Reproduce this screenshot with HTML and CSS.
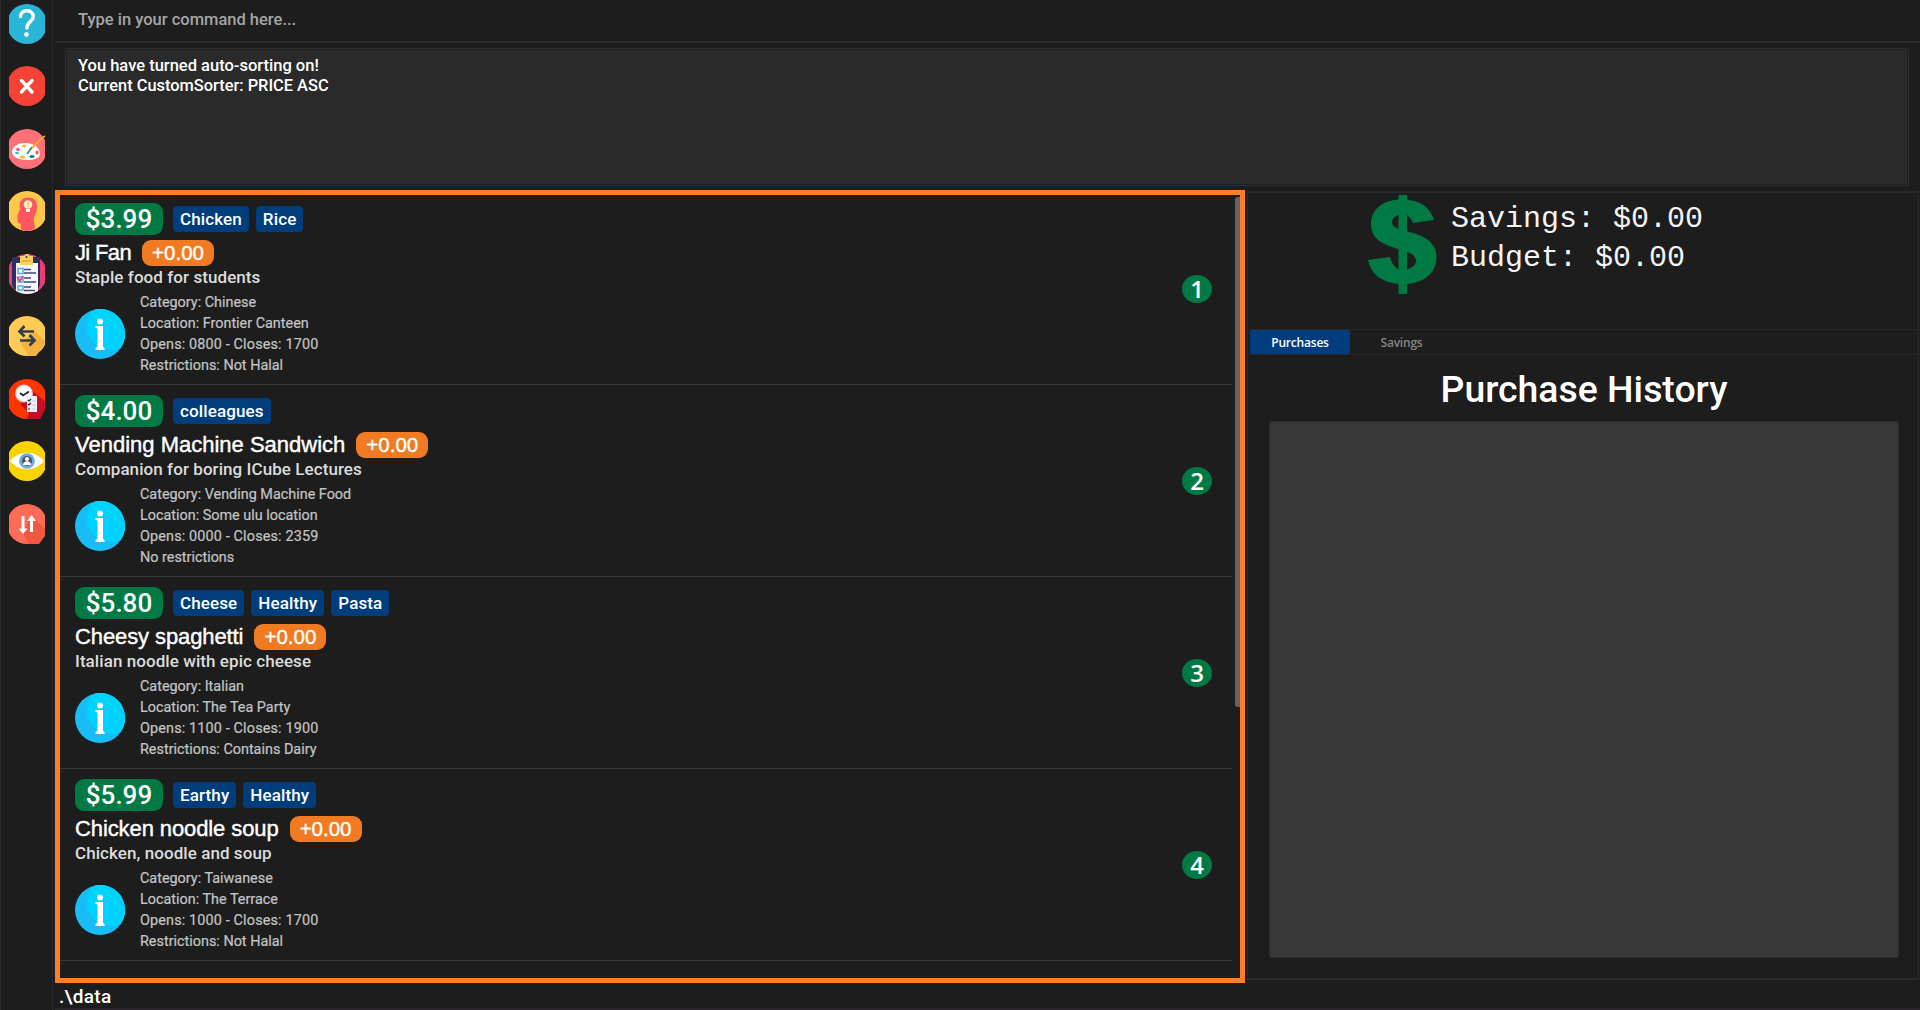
FILE: index.html
```html
<!DOCTYPE html>
<html lang="en">
<head>
<meta charset="utf-8">
<title>Food catalogue</title>
<link rel="stylesheet" href="styles.css">
</head>
<body>
<div class="app">
  <nav class="sidebar">
    <svg class="icon" viewBox="0 0 36 40"><circle cx="18" cy="20" r="20" fill="#29b6d6"/><path d="M11.500 12.500C11.500 4.500 25 5 24.300 13c-.4 4.500-6.300 4.500-6.300 11" fill="none" stroke="#fff" stroke-width="3.400" stroke-linecap="round"/><circle cx="17.500" cy="30.500" r="2.300" fill="#fff"/></svg>
    <svg class="icon" viewBox="0 0 36 40"><circle cx="18" cy="20" r="20" fill="#f44336"/><path d="M12.500 14.500l10.500 11.500M23 14.500l-10.500 11.500" stroke="#fff" stroke-width="3.400" stroke-linecap="round"/></svg>
    <svg class="icon" viewBox="0 0 36 40"><circle cx="18" cy="20" r="20" fill="#ff7079"/><path d="M3 23C3 17 10 13.500 17 14c8 .3 14 5 14 11 0 4-6 6-13 6-8 0-15-3-15-8z" fill="#fff"/><circle cx="9" cy="20.500" r="1.800" fill="#f4515f"/><ellipse cx="8" cy="24" rx="2" ry="1.300" fill="#28cdbb"/><ellipse cx="15" cy="17" rx="2.200" ry="1.500" fill="#ffb82b"/><ellipse cx="13.500" cy="28" rx="2.500" ry="1.500" fill="#ffb21f"/><ellipse cx="23" cy="27.500" rx="2.600" ry="1.500" fill="#167b88"/><ellipse cx="28" cy="23.500" rx="1.500" ry="2" fill="#f4515f"/><path d="M18 25l5-7" stroke="#348b91" stroke-width="1.800"/><path d="M23 19c5-4 6-8 13-12" fill="none" stroke="#f7a928" stroke-width="1.800"/></svg>
    <svg class="icon" viewBox="0 0 36 40"><circle cx="18" cy="20" r="20" fill="#ffc84a"/><path d="M8.500 24l2.500-6C9 10 14 6.500 19.500 6.500c6 0 8.500 4 8.500 9.500 0 7-4 9-3 15l1 6.500c-5 3-10 3-14 1l-.5-6c-3 .5-3-2-3-7z" fill="#ff5660"/><circle cx="19" cy="13.500" r="4.300" fill="#fff0bd"/><path d="M17 18h4v3h-4z" fill="#fff"/><path d="M19 12v4" stroke="#ffc84a" stroke-width="1.500"/></svg>
    <svg class="icon" viewBox="0 0 36 40"><circle cx="18" cy="20" r="20" fill="#e83e75"/><path d="M3 3h28v28l-2 4H5l-2-4z" fill="#2d2e63"/><path d="M7 9h22v28c-7 4-15 4-22 0z" fill="#f7f8fb"/><path d="M11 2h4c2-3 4-3 6 0h3v9H11z" fill="#ffd05a"/><path d="M13 7h9" stroke="#e8a93e" stroke-width="1.500"/><circle cx="17.500" cy="3" r="1" fill="#2d2e63"/><g fill="#fff" stroke="#5ba8dd" stroke-width="1.500"><path d="M9 14.500h5v5H9zM9 23h5v5H9zM9 32h5v4H9z"/></g><path d="M15 15.500h7M15 19h12M15 24h7M15 28h12M15 33h7M15 36.500h11" stroke="#41437b" stroke-width="1.700"/><path d="M8 23l3 4 3-5" fill="none" stroke="#e83e75" stroke-width="1.700"/></svg>
    <svg class="icon" viewBox="0 0 36 40"><circle cx="18" cy="20" r="20" fill="#fecb57"/><path d="M25 15l12 11-10 14H20L12 28z" fill="#f4b13d"/><path d="M25 15.500H11M15.500 10l-5 5.500 5 5M11 24.500h14M20.500 19l5 5.500-5 5" fill="none" stroke="#303f50" stroke-width="2.700"/></svg>
    <svg class="icon" viewBox="0 0 36 40"><circle cx="18" cy="20" r="20" fill="#ff3500"/><path d="M20 9l19 16-8 15H18l2-6-8-8z" fill="#c90c27"/><circle cx="15" cy="14.500" r="8.200" fill="#fff" stroke="#d8dcde" stroke-width="1.500"/><path d="M11 14l3 2.500 6-4" fill="none" stroke="#20282c" stroke-width="1.800"/><path d="M18 17h10v16H18z" fill="#f1f1f8"/><path d="M19 21l1 1 2-2M19 25l1 1 2-2M19 30h2" fill="none" stroke="#23252c" stroke-width="1.200"/><path d="M23 22h4M23 26h4M23 30h4" stroke="#c8cbdc"/></svg>
    <svg class="icon" viewBox="0 0 36 40"><circle cx="18" cy="20" r="20" fill="#fad400"/><path d="M1 20C10 9 26 9 35 20c-9 11-25 11-34 0z" fill="#fff"/><circle cx="18" cy="20" r="7.800" fill="#66afe0"/><circle cx="18" cy="20" r="5" fill="#4b5664"/><circle cx="18" cy="18" r="2.100" fill="#fff"/><path d="M14 24c0-5 8-5 8 0z" fill="#fff"/></svg>
    <svg class="icon" viewBox="0 0 36 40"><circle cx="18" cy="20" r="20" fill="#ff6b57"/><path d="M22 11l17 17-9 12H20l-6-11z" fill="#f0583f"/><path d="M14 12v15M22.500 28V14" stroke="#fff" stroke-width="3"/><path d="M9.500 24.500h9L14 30zM18 17h9l-4.500-6z" fill="#fff"/></svg>
  </nav>
  <main class="main">
    <header class="command">Type in your command here...</header>
    <section class="result"><div class="result-box"><div class="r1">You have turned auto-sorting on!</div><div class="r2">Current CustomSorter: PRICE ASC</div></div></section>
    <div class="content">
      <section class="foods">
        <article class="food">
          <div class="info">
            <div class="tags"><span class="price">$3.99</span><span class="tag">Chicken</span><span class="tag">Rice</span></div>
            <div class="title"><span class="name tighter">Ji Fan</span><span class="delta">+0.00</span></div>
            <div class="desc">Staple food for students</div>
            <div class="details"><svg class="i" viewBox="0 0 50 50"><use href="#info"/></svg><div><p>Category: Chinese</p><p>Location: Frontier Canteen</p><p class="hours">Opens: 0800 - Closes: 1700</p><p>Restrictions: Not Halal</p></div></div>
          </div><span class="num">1</span>
        </article>
        <article class="food">
          <div class="info">
            <div class="tags"><span class="price">$4.00</span><span class="tag">colleagues</span></div>
            <div class="title"><span class="name">Vending Machine Sandwich</span><span class="delta">+0.00</span></div>
            <div class="desc">Companion for boring ICube Lectures</div>
            <div class="details"><svg class="i" viewBox="0 0 50 50"><use href="#info"/></svg><div><p>Category: Vending Machine Food</p><p>Location: Some ulu location</p><p class="hours">Opens: 0000 - Closes: 2359</p><p>No restrictions</p></div></div>
          </div><span class="num">2</span>
        </article>
        <article class="food">
          <div class="info">
            <div class="tags"><span class="price">$5.80</span><span class="tag">Cheese</span><span class="tag">Healthy</span><span class="tag">Pasta</span></div>
            <div class="title"><span class="name tight">Cheesy spaghetti</span><span class="delta">+0.00</span></div>
            <div class="desc">Italian noodle with epic cheese</div>
            <div class="details"><svg class="i" viewBox="0 0 50 50"><use href="#info"/></svg><div><p>Category: Italian</p><p>Location: The Tea Party</p><p class="hours">Opens: 1100 - Closes: 1900</p><p>Restrictions: Contains Dairy</p></div></div>
          </div><span class="num">3</span>
        </article>
        <article class="food">
          <div class="info">
            <div class="tags"><span class="price">$5.99</span><span class="tag">Earthy</span><span class="tag">Healthy</span></div>
            <div class="title"><span class="name tight">Chicken noodle soup</span><span class="delta">+0.00</span></div>
            <div class="desc">Chicken, noodle and soup</div>
            <div class="details"><svg class="i" viewBox="0 0 50 50"><use href="#info"/></svg><div><p>Category: Taiwanese</p><p>Location: The Terrace</p><p class="hours">Opens: 1000 - Closes: 1700</p><p>Restrictions: Not Halal</p></div></div>
          </div><span class="num">4</span>
        </article>
        <div class="scroll"></div>
      </section>
      <aside class="side">
        <div class="wallet">
          <svg class="dollar" viewBox="0 0 70 100"><path d="M66 25C62 11 50 4.500 34 4.500 14 4.500 3 15 3 29 3 42 12 48 24 52l14 4.500c7 2.500 10 5.500 10 9.500s-4 7-9 8.500h-8C26 72 23 67 22 62L0 65c3 15 16 24 34 24 22 0 34.500-11 34.500-27C68.500 48 58 42 45 38l-14-4c-5-2-7-4-7-7s3-6 7-7.500l8 .5c3 2 5 5 6 8z"/><path d="M30.500 0h8.500v99h-8.500z"/></svg>
          <div class="money"><div>Savings: $0.00</div><div>Budget: $0.00</div></div>
        </div>
        <div class="tabs"><span class="tab active">Purchases</span><span class="tab">Savings</span></div>
        <h1>Purchase History</h1>
        <div class="panel"></div>
      </aside>
    </div>
    <footer class="footer">.\data</footer>
  </main>
</div>
<svg class="defs"><defs><g id="info"><circle cx="25" cy="25" r="25" fill="#19bdf6"/><path d="M20 .5A25 25 0 0 1 45.500 39.500C33 45 10 34 11.500 15c.5-8 4-12 8.500-14.500z" fill="#00d2ff"/><circle cx="25" cy="12.500" r="3" fill="#fff"/><path d="M20.500 17h7.500v21l1.500 1v2h-9v-2l2-1V19.500l-2-.5z" fill="#fff"/></g></defs></svg>
</body>
</html>
```
FILE: styles.css
```css
* { box-sizing: border-box; }
body { margin: 0; background: #1d1d1d; color: #fff; font: 500 16px Roboto, "Liberation Sans", sans-serif; }
p { margin: 0; }
.defs { position: absolute; width: 0; height: 0; }
.app { display: flex; width: 1920px; height: 1010px; overflow: hidden; border-left: 1px solid #292929; }
.sidebar { display: flex; flex-direction: column; gap: 22.5px; width: 52px; flex: none; padding: 3.5px 0 0 8px; border-right: 1px solid #292929; margin-right: 2px; }
.icon { display: block; width: 36px; height: 40px; overflow: hidden; flex: none; }
.main { flex: 1; min-width: 0; display: flex; flex-direction: column; border-bottom: 2px solid #292629; }
.command { height: 43px; flex: none; border-bottom: 2px solid #2a2a2a; padding: 0 23px; line-height: 39px; font-size: 16.5px; color: #a5a5a5; }
.result { height: 147px; flex: none; padding: 5px 11px 4px 10px; }
.result-box { height: 138px; background: #2a2a2a; border: 1px solid #2d2d2d; box-shadow: inset 0 0 0 1px #202020; padding: 7px 12px; line-height: 20px; }
.r1 { font-size: 16.5px; }
.r2 { font-size: 16.4px; }
.content { display: flex; height: 793px; flex: none; }
.foods { position: relative; width: 1190px; flex: none; border: 5px solid #ff7f27; overflow: hidden; }
.food { display: flex; width: 1172px; height: 192px; padding: 10px 20px 0 15px; border-bottom: 1px solid #383838; }
.food:first-child { height: 190px; padding-top: 8px; }
.info { flex: 1; }
.tags { display: flex; align-items: center; height: 32px; }
.price { width: 88px; height: 32px; margin-right: 10px; border-radius: 9px; background: #007a45; font-size: 26px; line-height: 33px; text-align: center; }
.tag { height: 26px; line-height: 27px; padding: 0 7px; margin-right: 7px; border-radius: 4px; background: #003d7c; font-size: 17px; letter-spacing: .12px; }
.title { display: flex; align-items: center; height: 26px; margin-top: 5px; gap: 11px; }
.name { font: 22px/26px "Liberation Sans", sans-serif; -webkit-text-stroke: .4px #fff; }
.tight { letter-spacing: -.1px; }
.tighter { letter-spacing: -.65px; }
.delta { width: 72px; height: 26px; border-radius: 9px; background: #f07b22; font: 20.5px/26px "Liberation Sans", sans-serif; -webkit-text-stroke: .4px #fff; text-align: center; }
.desc { height: 24px; line-height: 22px; color: #dcdcdc; font-size: 17px; letter-spacing: .07px; }
.details { display: flex; gap: 15px; padding-top: 2px; font-size: 14.4px; font-weight: 400; line-height: 21px; color: #c4c4c4; -webkit-text-stroke: .2px #c4c4c4; }
.i { width: 50px; height: 50px; margin-top: 17px; }
.hours { letter-spacing: .15px; }
.num { width: 30px; height: 28px; margin-top: 72px; border-radius: 15px / 14px; background: #007a45; font: 600 24px/28px "Open Sans", sans-serif; text-align: center; }
.scroll { position: absolute; right: 0; top: 2px; width: 5px; height: 510px; background: #626262; border-radius: 3px 0 0 3px; }
.side { flex: 1; height: 789px; margin: 1px 1px 0 2px; border: 1px solid #292929; border-width: 2px 1px; }
.wallet { display: flex; height: 136px; padding: 2px 0 0 120px; gap: 13px; }
.dollar { width: 70px; height: 100px; fill: #007a45; }
.money { padding-top: 5px; font: 30px/39px "Liberation Mono", monospace; color: #f4f4f4; }
.tabs { display: flex; height: 26px; padding-left: 2px; border: 1px solid #292929; border-width: 1px 0; font: 600 12px/25px "Open Sans", sans-serif; color: #858585; }
.tab { width: 103px; text-align: center; letter-spacing: -.2px; }
.active { width: 100px; background: #003d7c; color: #fff; border-radius: 3px 3px 0 0; }
h1 { margin: 0; padding-left: 2px; height: 66px; font-weight: 500; font-size: 37.4px; line-height: 68px; text-align: center; }
.panel { height: 537px; margin: 0 19px 0 21px; background: #383838; border: 1px solid #2b2b2b; border-radius: 3px; }
.footer { padding-left: 4px; font-size: 19px; line-height: 27px; letter-spacing: .3px; }
```
